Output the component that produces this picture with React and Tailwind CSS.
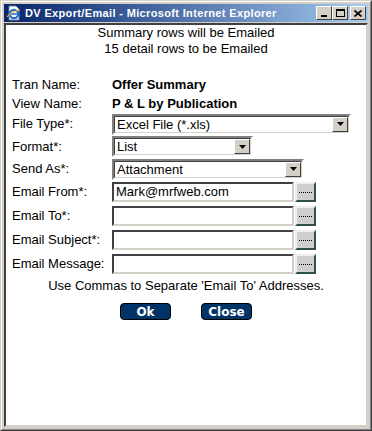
import React from 'react';

const font = { fontFamily: '"Liberation Sans", Arial, sans-serif' };

function TitleButton({ children, className = '' }) {
  return (
    <div className={`w-[16px] h-[14px] bg-[#d4d0c8] border border-t-white border-l-white border-r-[#404040] border-b-[#404040] flex items-center justify-center ${className}`}>
      {children}
    </div>
  );
}

function Select({ value, width }) {
  return (
    <div className={`${width} h-[21px] flex bg-white border-2 border-t-[#808080] border-l-[#808080] border-r-white border-b-white`}>
      <div className="flex-1 flex border border-t-[#404040] border-l-[#404040] border-r-[#d4d0c8] border-b-[#d4d0c8]">
        <div className="flex-1 pl-[2px] text-[13px] leading-[15px] text-black">{value}</div>
        <div className="w-[16px] h-[15px] bg-[#d4d0c8] border border-t-white border-l-white border-r-[#404040] border-b-[#404040] flex items-center justify-center">
          <svg width="7" height="4" viewBox="0 0 7 4">
            <path d="M0 0h7L3.5 4z" fill="#000" />
          </svg>
        </div>
      </div>
    </div>
  );
}

function TextBox({ value }) {
  return (
    <div className="flex items-center gap-[1px]">
      <div className="w-[182px] h-[20px] bg-white border-2 border-t-[#404040] border-l-[#404040] border-r-[#d4d0c8] border-b-[#d4d0c8] pl-[2px] text-[13px] leading-[15px] text-black">
        {value}
      </div>
      <div className="w-[21px] h-[20px] bg-[#cfcfcf] border-2 border-t-[#eeeeee] border-l-[#eeeeee] border-r-[#2f4f4f] border-b-[#2f4f4f] flex items-center justify-center">
        <div className="w-[13px] border-t border-dotted border-black" />
      </div>
    </div>
  );
}

function Row({ label, children, h = 'h-[23px]' }) {
  return (
    <div className={`flex items-center ${h}`}>
      <div className="w-[106px] text-[13px] leading-[16px] text-black pl-[6px]">{label}</div>
      {children}
    </div>
  );
}

export default function App() {
  return (
    <div style={font} className="w-[372px] h-[431px] bg-[#d4d0c8] border border-t-[#d4d0c8] border-l-[#d4d0c8] border-r-[#404040] border-b-[#404040]">
      <div className="h-full flex flex-col border border-t-white border-l-white border-r-[#808080] border-b-[#808080] p-[2px]">
        {/* title bar */}
        <div className="h-[18px] flex items-center bg-gradient-to-r from-[#0a246a] to-[#a6caf0] pl-[2px] pr-[2px]">
          <svg width="16" height="16" viewBox="0 0 16 16" className="mr-[3px]">
            <path d="M3 1h7l3 3v11H3z" fill="#fff" stroke="#6b7b9b" strokeWidth="1" />
            <circle cx="8" cy="9" r="4.2" fill="none" stroke="#1f6fd0" strokeWidth="2.2" />
            <path d="M4.5 9h7" stroke="#1f6fd0" strokeWidth="1.6" />
            <path d="M1 12c3-4 9-7 13-7" stroke="#f2b233" strokeWidth="1.2" fill="none" />
          </svg>
          <span className="text-white font-bold text-[11px] leading-[14px] tracking-[0.35px] flex-1 whitespace-nowrap">
            DV Export/Email - Microsoft Internet Explorer
          </span>
          <TitleButton>
            <div className="w-[6px] h-[2px] bg-black mt-[6px] -ml-[1px]" />
          </TitleButton>
          <TitleButton>
            <div className="w-[9px] h-[8px] border border-t-2 border-black" />
          </TitleButton>
          <TitleButton className="ml-[2px]">
            <svg width="8" height="7" viewBox="0 0 8 7">
              <path d="M0.5 0.5l7 6M7.5 0.5l-7 6" stroke="#000" strokeWidth="1.6" />
            </svg>
          </TitleButton>
        </div>

        {/* content */}
        <div className="flex-1 mt-[1px] bg-white border-2 border-t-[#404040] border-l-[#404040] border-r-[#d4d0c8] border-b-[#d4d0c8]">
          <div className="text-center text-[13px] leading-[16px] text-black">
            <div>Summary rows will be Emailed</div>
            <div>15 detail rows to be Emailed</div>
          </div>

          <div className="mt-[18px]">
            <Row label="Tran Name:" h="h-[19px]">
              <span className="text-[13px] font-bold leading-[16px]">Offer Summary</span>
            </Row>
            <Row label="View Name:" h="h-[19px]">
              <span className="text-[13px] font-bold leading-[16px]">P &amp; L by Publication</span>
            </Row>
            <Row label="File Type*:" h="h-[22px]">
              <Select value="Excel File (*.xls)" width="w-[239px]" />
            </Row>
            <Row label="Format*:" h="h-[23px]">
              <Select value="List" width="w-[141px]" />
            </Row>
            <Row label="Send As*:" h="h-[22px]">
              <Select value="Attachment" width="w-[192px]" />
            </Row>
            <Row label="Email From*:" h="h-[24px]">
              <TextBox value="Mark@mrfweb.com" />
            </Row>
            <Row label="Email To*:" h="h-[24px]">
              <TextBox value="" />
            </Row>
            <Row label="Email Subject*:" h="h-[24px]">
              <TextBox value="" />
            </Row>
            <Row label="Email Message:" h="h-[24px]">
              <TextBox value="" />
            </Row>
          </div>

          <div className="text-center text-[13px] leading-[16px] text-black mt-[2px]">
            Use Commas to Separate 'Email To' Addresses.
          </div>

          <div className="flex justify-center gap-[30px] mt-[9px]">
            <button className="w-[51px] h-[17px] bg-[#003366] border border-black rounded-[4px] text-white font-bold text-[12px] leading-[14px]" style={{ fontFamily: '"DejaVu Sans", Verdana, sans-serif' }}>
              Ok
            </button>
            <button className="w-[51px] h-[17px] bg-[#003366] border border-black rounded-[4px] text-white font-bold text-[12px] leading-[14px]" style={{ fontFamily: '"DejaVu Sans", Verdana, sans-serif' }}>
              Close
            </button>
          </div>
        </div>
      </div>
    </div>
  );
}
